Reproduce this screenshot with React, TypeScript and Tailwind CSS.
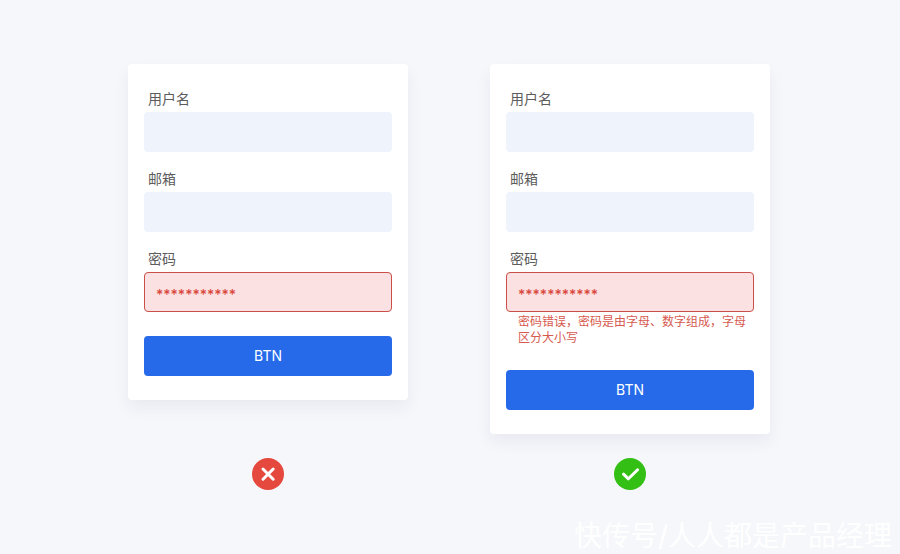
import { useId, type ReactNode } from "react";

type FieldProps = {
  label: string;
  value?: string;
  invalid?: boolean;
  message?: string;
};

function Field({ label, value = "", invalid = false, message }: FieldProps) {
  const id = useId();
  const tone = invalid
    ? "border border-[#c9504a] bg-[#fbe1e1] text-[#d9463c]"
    : "bg-[#eff4fc] text-[#555555]";
  return (
    <div>
      <label htmlFor={id} className="mb-0.5 block pl-1 text-sm leading-[22px] text-[#5c5c5c]">
        {label}
      </label>
      <input
        id={id}
        type="text"
        defaultValue={value}
        aria-invalid={invalid}
        aria-describedby={message ? `${id}-message` : undefined}
        className={`block h-10 w-full rounded px-[11px] pt-1 text-sm font-medium outline-none ${tone}`}
      />
      {message && (
        <p id={`${id}-message`} className="mt-0.5 pl-3 text-xs leading-4 text-[#d65a50]">
          {message}
        </p>
      )}
    </div>
  );
}

function FormCard({ message }: { message?: string }) {
  return (
    <form
      className="rounded bg-white px-4 py-6 shadow-[0_8px_16px_rgba(30,40,70,0.06)]"
      onSubmit={(event) => event.preventDefault()}
    >
      <div className="flex flex-col gap-4">
        <Field label="用户名" />
        <Field label="邮箱" />
        <Field label="密码" value="***********" invalid message={message} />
      </div>
      <button type="submit" className="mt-6 block h-10 w-full rounded bg-[#266aea] text-sm text-white">
        BTN
      </button>
    </form>
  );
}

function Example({ children, icon }: { children: ReactNode; icon: ReactNode }) {
  return (
    <section className="flex w-[280px] flex-col justify-between gap-6">
      {children}
      <div className="flex justify-center">{icon}</div>
    </section>
  );
}

function WrongIcon() {
  return (
    <svg viewBox="0 0 32 32" className="size-8" role="img" aria-label="错误">
      <circle cx="16" cy="16" r="16" fill="#e5493d" />
      <path d="M11 11 21.2 21.2M21.2 11 11 21.2" stroke="#fff" strokeWidth="3" strokeLinecap="round" />
    </svg>
  );
}

function RightIcon() {
  return (
    <svg viewBox="0 0 32 32" className="size-8" role="img" aria-label="正确">
      <circle cx="16" cy="16" r="16" fill="#34bf14" />
      <path
        d="M9.5 16.2 14.4 20.8 23.6 11.8"
        fill="none"
        stroke="#fff"
        strokeWidth="3"
        strokeLinecap="round"
        strokeLinejoin="round"
      />
    </svg>
  );
}

export default function App() {
  return (
    <main className="relative min-h-screen bg-[#f5f7fb] pt-16 pr-0.5 pb-16 font-['Inter','Noto_Sans_CJK_SC',sans-serif]">
      <div className="flex justify-center gap-[82px]">
        <Example icon={<WrongIcon />}>
          <FormCard />
        </Example>
        <Example icon={<RightIcon />}>
          <FormCard message="密码错误，密码是由字母、数字组成，字母区分大小写" />
        </Example>
      </div>
      <p className="absolute right-2 bottom-0 text-[28px] leading-9 text-white">
        快传号/人人都是产品经理
      </p>
    </main>
  );
}
